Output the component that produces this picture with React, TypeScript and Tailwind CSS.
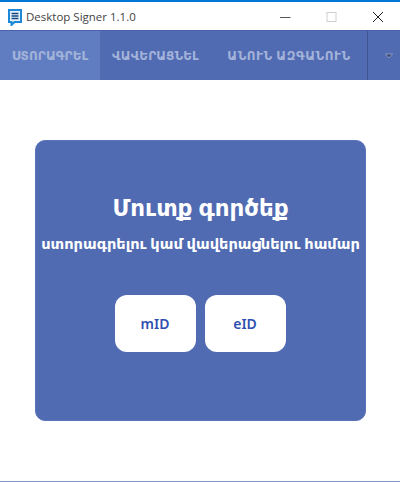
export default function App() {
  const font = { fontFamily: '"Noto Sans", "DejaVu Sans", sans-serif' };
  return (
    <div className="w-[400px] h-[482px] flex flex-col bg-white overflow-hidden border-t-2 border-t-[#0078d7] border-b border-b-[#7f9ac8]" style={font}>
      <div className="h-[28px] flex items-center shrink-0">
        <svg className="ml-[8px] shrink-0 mt-[2px]" width="14" height="17" viewBox="0 0 14 17">
          <path d="M1 1 H13 V13 H6.5 L3.5 16 V13 H1 Z" fill="#e8f3fb" stroke="#1e88d8" strokeWidth="2" />
          <path d="M3.5 4.5 H10.5 M3.5 7 H10.5 M3.5 9.5 H10.5" stroke="#12467f" strokeWidth="1.3" />
        </svg>
        <span className="ml-[4px] text-[11.5px] text-[#444] font-['Open_Sans',sans-serif] mt-[2px]">Desktop Signer 1.1.0</span>
        <div className="ml-auto flex items-center">
          <svg width="12" height="12" viewBox="0 0 12 12" className="mr-[34px] mt-[1px]"><path d="M0 6.5 H10.5" stroke="#555" strokeWidth="1" /></svg>
          <svg width="12" height="12" viewBox="0 0 12 12" className="mr-[34px] mt-[1px]"><rect x="1" y="1.5" width="9" height="9" fill="none" stroke="#d0d0d0" strokeWidth="1" /></svg>
          <svg width="12" height="12" viewBox="0 0 12 12" className="mr-[16px] mt-[1px]"><path d="M1 1 L11 11 M11 1 L1 11" stroke="#222" strokeWidth="1" /></svg>
        </div>
      </div>
      <div className="h-[50px] flex shrink-0 bg-[#516bb3] border-t border-t-[#4a63a8] text-[12px] font-semibold text-[#a3b3da] tracking-[0.1px]">
        <div className="w-[100px] bg-[#617dc1] flex items-center justify-center">ՍՏՈՐԱԳՐԵԼ</div>
        <div className="w-[111px] flex items-center justify-center">ՎԱՎԵՐԱՑՆԵԼ</div>
        <div className="flex-1 flex items-center justify-center tracking-[0.55px]">ԱՆՈՒՆ ԱԶԳԱՆՈՒՆ</div>
        <div className="w-[33px] border-l border-l-[#3f5590] flex items-center pl-[17px]">
          <svg width="8" height="6" viewBox="0 0 8 6"><path d="M0.5 1 H7.5 L4 5 Z" fill="#3a4a75" stroke="#c4cde4" strokeWidth="0.5" /></svg>
        </div>
      </div>
      <div className="flex-1 flex flex-col pt-[60px] items-center">
        <div className="w-[331px] h-[281px] ml-[1px] bg-[#516bb3] border border-[#5b75bb] rounded-[10px] flex flex-col items-center text-white">
          <div className="mt-[48px] text-[23px] font-semibold leading-[36px]">Մուտք գործեք</div>
          <div className="mt-[6px] text-[14.6px] font-semibold leading-[24px] whitespace-nowrap">ստորագրելու կամ վավերացնելու համար</div>
          <div className="mt-[40px] flex gap-[9px] -ml-[1px]">
            <button className="w-[81px] h-[57px] rounded-[12px] bg-white text-[#2f50b0] text-[14px] font-semibold">mID</button>
            <button className="w-[81px] h-[57px] rounded-[12px] bg-white text-[#2f50b0] text-[14px] font-semibold">eID</button>
          </div>
        </div>
      </div>
    </div>
  );
}
